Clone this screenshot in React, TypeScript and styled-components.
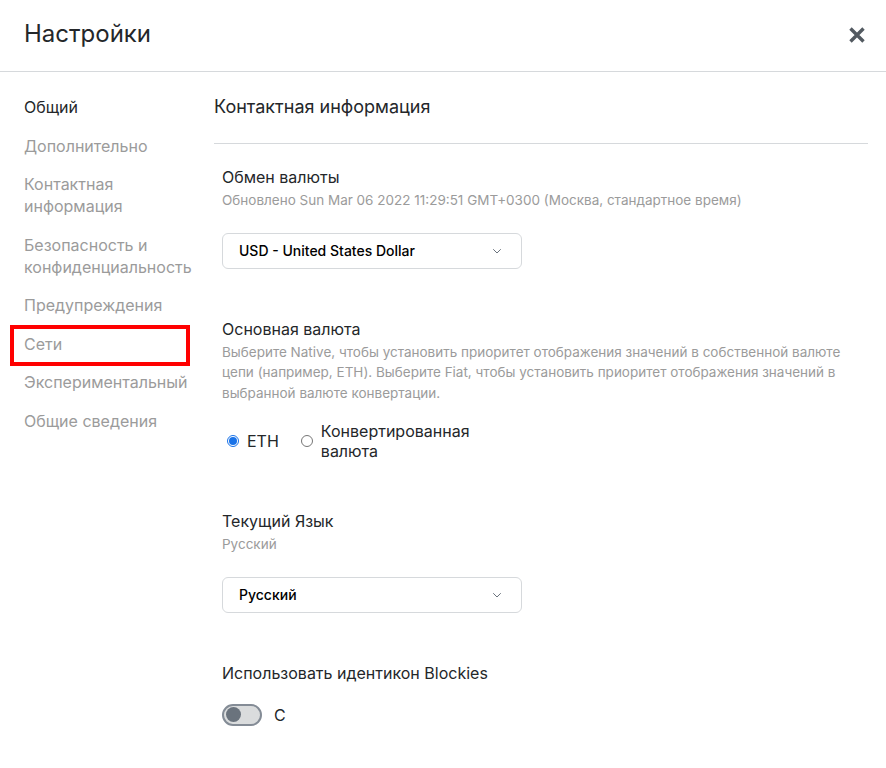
import React, { useState } from 'react';
import styled, { createGlobalStyle } from 'styled-components';

const GlobalStyle = createGlobalStyle`
	html, body {
		margin: 0;
		padding: 0;
		background: #ffffff;
	}
	body {
		font-family: 'Inter', 'Liberation Sans', sans-serif;
		color: #24272a;
	}
`;

const Page = styled.div`
	width: 886px;
	height: 768px;
	overflow: hidden;
	display: flex;
	flex-direction: column;
`;

const Header = styled.div`
	height: 72px;
	display: flex;
	align-items: center;
	justify-content: space-between;
	padding: 0 20px 0 24px;
	border-bottom: 1px solid #d6d9dc;
	box-sizing: border-box;
`;

const Title = styled.h1`
	margin: 0 0 4px;
	font-size: 24px;
	font-weight: 400;
	color: #24272a;
`;

const CloseButton = styled.button`
	border: 0;
	background: none;
	padding: 0;
	width: 18px;
	height: 18px;
	margin-bottom: 1px;
	display: flex;
	align-items: center;
	justify-content: center;
	cursor: pointer;
`;

const Body = styled.div`
	display: flex;
	flex: 1;
`;

const Sidebar = styled.nav`
	width: 190px;
	padding: 24px 0 0 24px;
	display: flex;
	flex-direction: column;
	gap: 16.5px;
	box-sizing: border-box;
`;

const NavItem = styled.div<{ $active?: boolean; $highlight?: boolean }>`
	font-size: 16px;
	line-height: 22px;
	color: ${(p) => (p.$active ? '#24272a' : '#9b9b9b')};
	position: relative;
	${(p) =>
		p.$highlight &&
		`
		&::after {
			content: '';
			position: absolute;
			left: -14px;
			top: -8px;
			width: 180px;
			height: 41px;
			box-sizing: border-box;
			border: 4px solid #ff0000;
		}
	`}
`;

const NavText = styled.span`
	display: block;
	width: 176px;
`;

const Content = styled.div`
	flex: 1;
	padding: 24px 18px 0 24px;
	box-sizing: border-box;
`;

const ContentHeader = styled.div`
	font-size: 18px;
	line-height: 22px;
	color: #24272a;
	padding-bottom: 25px;
	border-bottom: 1px solid #d6d9dc;
`;

const Sections = styled.div`
	padding: 21px 0 0 8px;
	display: flex;
	flex-direction: column;
	gap: 48px;
`;

const Section = styled.div`
	display: flex;
	flex-direction: column;
`;

const Label = styled.div`
	font-size: 16px;
	line-height: 24px;
	color: #24272a;
`;

const Hint = styled.div`
	font-size: 13.5px;
	line-height: 20.5px;
	color: #9b9b9b;
	margin-top: 1px;
`;

const Select = styled.div`
	margin-top: 22px;
	width: 300px;
	height: 36px;
	box-sizing: border-box;
	border: 1px solid #d6d9dc;
	border-radius: 6px;
	display: flex;
	align-items: center;
	justify-content: space-between;
	padding: 0 18px 0 16px;
	font-size: 14px;
	font-weight: 500;
	color: #000000;
`;

const RadioRow = styled.div`
	margin-top: 18px;
	display: flex;
	align-items: center;
	gap: 22px;
	padding-left: 5px;
`;

const RadioOption = styled.label`
	display: flex;
	align-items: center;
	gap: 8px;
	font-size: 16px;
	line-height: 20px;
	color: #24272a;
`;

const RadioText = styled.span`
	width: 160px;
`;

const RadioDot = styled.span<{ $checked?: boolean }>`
	width: 12px;
	height: 12px;
	border-radius: 50%;
	box-sizing: border-box;
	border: 1px solid ${(p) => (p.$checked ? '#1a73e8' : '#767676')};
	display: flex;
	align-items: center;
	justify-content: center;
	&::after {
		content: '';
		width: 8px;
		height: 8px;
		border-radius: 50%;
		background: ${(p) => (p.$checked ? '#1a73e8' : 'transparent')};
	}
`;

const ToggleRow = styled.div`
	margin-top: 19px;
	display: flex;
	align-items: center;
	gap: 12px;
	font-size: 16px;
	color: #24272a;
`;

const Track = styled.div`
	width: 40px;
	height: 22px;
	border-radius: 11px;
	box-sizing: border-box;
	border: 2px solid #848c96;
	background: #dadcdd;
	display: flex;
	align-items: center;
	padding-left: 2px;
`;

const Knob = styled.div`
	width: 15px;
	height: 15px;
	border-radius: 50%;
	background: #6a737d;
`;

const Chevron = () => (
	<svg width='12' height='12' viewBox='0 0 12 12' fill='none'>
		<path d='M2.5 4.5L6 8l3.5-3.5' stroke='#6a737d' strokeWidth='1' strokeLinecap='round' strokeLinejoin='round' />
	</svg>
);

const navItems = [
	'Общий',
	'Дополнительно',
	'Контактная информация',
	'Безопасность и конфиденциальность',
	'Предупреждения',
	'Сети',
	'Экспериментальный',
	'Общие сведения'
];

export default function App() {
	const [native, setNative] = useState(true);

	return (
		<Page>
			<GlobalStyle />
			<Header>
				<Title>Настройки</Title>
				<CloseButton aria-label='close'>
					<svg width='18' height='18' viewBox='0 0 18 18'>
						<path d='M2.5 2.5L15.5 15.5M15.5 2.5L2.5 15.5' stroke='#535a61' strokeWidth='3.4' strokeLinecap='butt' />
					</svg>
				</CloseButton>
			</Header>
			<Body>
				<Sidebar>
					{navItems.map((item, i) => (
						<NavItem key={item} $active={i === 0} $highlight={item === 'Сети'}>
							<NavText>{item}</NavText>
						</NavItem>
					))}
				</Sidebar>
				<Content>
					<ContentHeader>Контактная информация</ContentHeader>
					<Sections>
						<Section>
							<Label>Обмен валюты</Label>
							<Hint>Обновлено Sun Mar 06 2022 11:29:51 GMT+0300 (Москва, стандартное время)</Hint>
							<Select>
								<span>USD - United States Dollar</span>
								<Chevron />
							</Select>
						</Section>
						<Section>
							<Label>Основная валюта</Label>
							<Hint>
								Выберите Native, чтобы установить приоритет отображения значений в собственной валюте цепи (например,
								ETH). Выберите Fiat, чтобы установить приоритет отображения значений в выбранной валюте конвертации.
							</Hint>
							<RadioRow>
								<RadioOption onClick={() => setNative(true)}>
									<RadioDot $checked={native} />
									<span>ETH</span>
								</RadioOption>
								<RadioOption onClick={() => setNative(false)}>
									<RadioDot $checked={!native} />
									<RadioText>Конвертированная валюта</RadioText>
								</RadioOption>
							</RadioRow>
						</Section>
						<Section>
							<Label>Текущий Язык</Label>
							<Hint>Русский</Hint>
							<Select>
								<span>Русский</span>
								<Chevron />
							</Select>
						</Section>
						<Section>
							<Label>Использовать идентикон Blockies</Label>
							<ToggleRow>
								<Track>
									<Knob />
								</Track>
								<span>С</span>
							</ToggleRow>
						</Section>
					</Sections>
				</Content>
			</Body>
		</Page>
	);
}
